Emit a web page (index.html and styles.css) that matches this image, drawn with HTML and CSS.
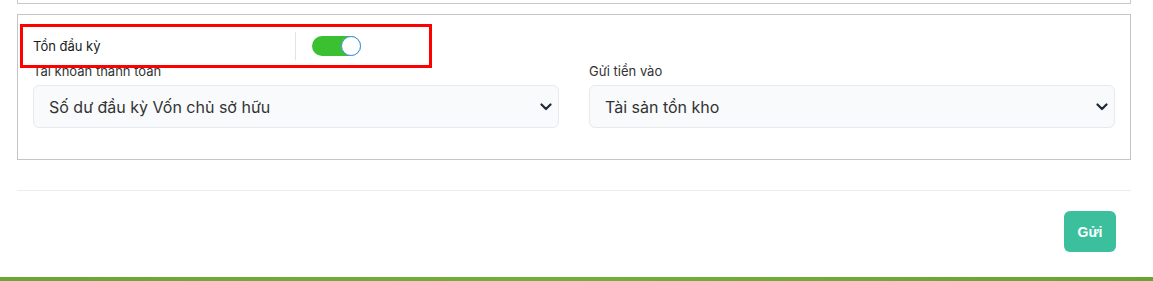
FILE: index.html
```html
<!DOCTYPE html>
<html lang="vi">
<head>
<meta charset="utf-8">
<link rel="stylesheet" href="styles.css">
</head>
<body>
<div class="page">
  <div class="prev-box"></div>
  <div class="card">
    <div class="toggle-row">
      <span class="toggle-label">Tồn đầu kỳ</span>
      <span class="divider"></span>
      <span class="switch"><span class="knob"></span></span>
    </div>
    <div class="highlight"></div>
    <div class="grid">
      <div class="group">
        <label class="field-label">Tài khoản thanh toán</label>
        <div class="select">
          <span>Số dư đầu kỳ Vốn chủ sở hữu</span>
          <svg class="chev" width="12" height="8" viewBox="0 0 12 8"><path d="M1.5 1.5 L6 6 L10.5 1.5" fill="none" stroke="#1f2937" stroke-width="2.2" stroke-linecap="round" stroke-linejoin="round"/></svg>
        </div>
      </div>
      <div class="group">
        <label class="field-label">Gửi tiền vào</label>
        <div class="select">
          <span>Tài sản tồn kho</span>
          <svg class="chev" width="12" height="8" viewBox="0 0 12 8"><path d="M1.5 1.5 L6 6 L10.5 1.5" fill="none" stroke="#1f2937" stroke-width="2.2" stroke-linecap="round" stroke-linejoin="round"/></svg>
        </div>
      </div>
    </div>
  </div>
  <div class="rule"></div>
  <div class="actions">
    <button class="btn">Gửi</button>
  </div>
</div>
<div class="footer-bar"></div>
</body>
</html>
```

FILE: styles.css
```css
html, body {
  margin: 0;
  padding: 0;
  background: #fff;
  height: 281px;
  overflow: hidden;
}
body {
  font-family: Inter, "Noto Sans", sans-serif;
  color: #222;
  display: flex;
  flex-direction: column;
}
.page {
  padding-left: 17px;
  width: 1114px;
  flex: 1;
}
.prev-box {
  height: 3px;
  border: 1px solid #c8c8c8;
  border-top: none;
  margin-bottom: 10px;
}
.card {
  position: relative;
  border: 1px solid #c4c4c4;
  padding: 15px 15px 15px 15px;
}
.toggle-row {
  display: flex;
  align-items: center;
  height: 28px;
  padding-top: 2px;
}
.toggle-label {
  font-size: 13px;
  color: #1a1a1a;
  width: 262px;
}
.divider {
  width: 1px;
  height: 28px;
  background: #dfe3ea;
}
.switch {
  margin-left: 16px;
  width: 49px;
  height: 20px;
  border-radius: 10px;
  background: #3ac030;
  position: relative;
  display: flex;
  justify-content: flex-end;
}
.knob {
  width: 18px;
  height: 18px;
  border-radius: 50%;
  background: #fff;
  border: 1px solid #4d8ef0;
}
.highlight {
  position: absolute;
  left: 2px;
  top: 9px;
  width: 406px;
  height: 38px;
  border: 3px solid #f00;
  pointer-events: none;
  z-index: 2;
}
.grid {
  display: grid;
  grid-template-columns: 1fr 1fr;
  gap: 30px;
  margin-top: 2px;
  margin-bottom: 16px;
}
.field-label {
  display: block;
  font-size: 13px;
  color: #333;
  line-height: 18px;
  margin-bottom: 5px;
}
.select {
  height: 41px;
  border: 1px solid #e6e9ee;
  border-radius: 6px;
  background: #f9fafb;
  display: flex;
  align-items: center;
  justify-content: space-between;
  padding: 0 6px 0 15px;
  font-size: 16px;
  color: #333;
}
.chev {
  display: block;
}
.rule {
  height: 1px;
  background: #ececec;
  margin-top: 30px;
}
.actions {
  display: flex;
  justify-content: flex-end;
  padding-top: 20px;
  padding-right: 15px;
}
.btn {
  width: 52px;
  height: 41px;
  border: none;
  border-radius: 6px;
  background: #3bbf9d;
  color: #fff;
  font-family: "Liberation Sans", Arial, sans-serif;
  font-weight: bold;
  font-size: 14px;
  padding: 0;
}
.footer-bar {
  height: 4px;
  background: linear-gradient(90deg, #6ca535, #74ae3a 50%, #6aa332);
}
```
